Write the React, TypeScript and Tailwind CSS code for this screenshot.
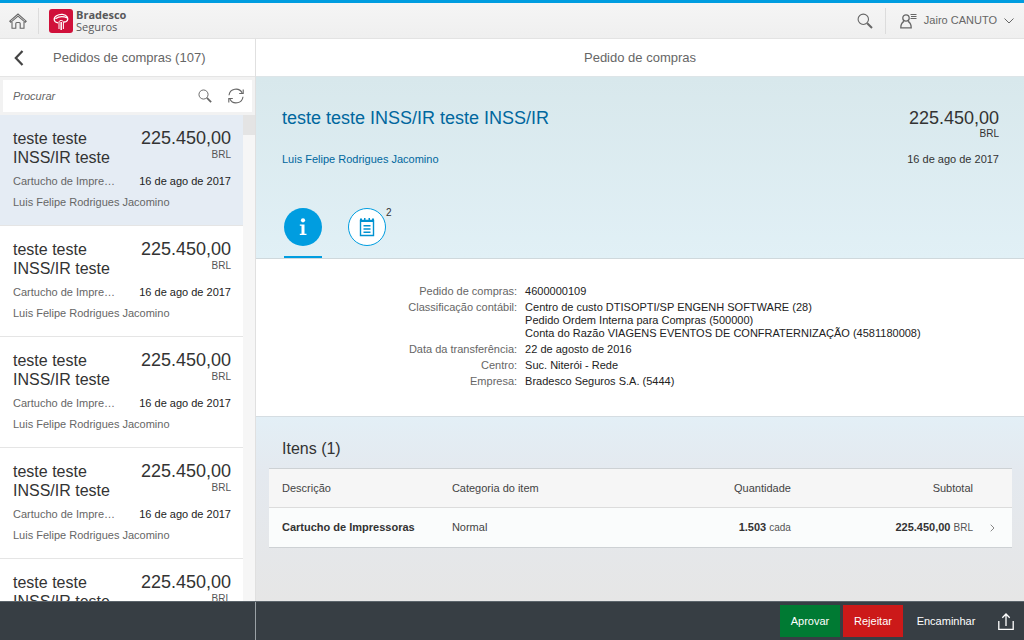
import React, { useState } from 'react';

interface Order {
  id: string;
  title: string;
  amount: string;
  currency: string;
  item: string;
  date: string;
  requester: string;
}

const ORDERS: Order[] = ['4600000109', '4600000110', '4600000111', '4600000112', '4600000113'].map(
  (id) => ({
    id,
    title: 'teste teste INSS/IR teste',
    amount: '225.450,00',
    currency: 'BRL',
    item: 'Cartucho de Impressoras',
    date: '16 de ago de 2017',
    requester: 'Luis Felipe Rodrigues Jacomino',
  })
);

const DETAILS: { label: string; lines: string[] }[] = [
  { label: 'Pedido de compras:', lines: ['4600000109'] },
  {
    label: 'Classificação contábil:',
    lines: [
      'Centro de custo DTISOPTI/SP ENGENH SOFTWARE (28)',
      'Pedido Ordem Interna para Compras (500000)',
      'Conta do Razão VIAGENS EVENTOS DE CONFRATERNIZAÇÃO (4581180008)',
    ],
  },
  { label: 'Data da transferência:', lines: ['22 de agosto de 2016'] },
  { label: 'Centro:', lines: ['Suc. Niterói - Rede'] },
  { label: 'Empresa:', lines: ['Bradesco Seguros S.A. (5444)'] },
];

const SearchIcon = ({ className }: { className: string }) => (
  <svg viewBox="0 0 16 16" className={className} fill="none" stroke="currentColor">
    <circle cx="6.3" cy="6.3" r="5.2" strokeWidth="1.1" />
    <path d="M10.2 10.2l4.8 4.8" strokeWidth="2" />
  </svg>
);

const HomeIcon = () => (
  <svg viewBox="0 0 18 16" className="w-[18px] h-4" fill="none" stroke="currentColor" strokeWidth="1.1">
    <path d="M.8 8.2L9 1l8.2 7.2-1 1.1L9 3.2 1.8 9.3z" />
    <path d="M3 9v6.3h3.8V10.5q0-1 1-1h2.4q1 0 1 1v4.8H15V9" />
  </svg>
);

const RefreshIcon = () => (
  <svg viewBox="0 0 16 16" className="w-4 h-4" fill="none" stroke="currentColor" strokeWidth="1.1">
    <path d="M1 7.3A7 7 0 0 1 14.2 5M15 8.7A7 7 0 0 1 1.8 11" />
    <path d="M15.2 1.5v4h-4M.8 14.5v-4h4" />
  </svg>
);

const UserIcon = () => (
  <svg viewBox="0 0 17 16" className="w-[17px] h-4" fill="none" stroke="currentColor" strokeWidth="1.3">
    <circle cx="6" cy="5" r="3.2" />
    <path d="M4 8.4C1.8 9.5.8 11.5.8 14.8h10.4c0-3.3-1-5.3-3.2-6.4" />
    <path d="M10.5 1.5h6M11 3.5h5.5M10.5 5.5h6" strokeWidth="1" />
  </svg>
);

const Logo = () => (
  <div className="flex items-center gap-[3px]">
    <svg viewBox="0 0 24 24" className="w-6 h-6">
      <rect width="24" height="24" rx="3" fill="#d0103a" />
      <path
        d="M9 13.8C4.500 13.500 4 9 7.500 6.800 11 4.600 16.500 5 18.300 8c1.500 2.800-.5 5-3.300 5M6.500 9.800C9.500 7.600 14.500 7.200 18.300 9"
        fill="none"
        stroke="#fff"
        strokeWidth="1.3"
      />
      <path d="M10 20v-7.200c.3-1.800 4-1.800 4.400 0V20" fill="none" stroke="#fff" strokeWidth="1" />
      <path d="M12.2 13v8" stroke="#fff" strokeWidth="1.5" />
    </svg>
    <div className="font-['Open_Sans',sans-serif] text-[11px] leading-[12px] text-[#58585a]">
      <div className="font-bold">Bradesco</div>
      <div>Seguros</div>
    </div>
  </div>
);

const OrderRow = ({ order, selected, onSelect }: { order: Order; selected: boolean; onSelect: () => void }) => (
  <li>
    <button
      onClick={onSelect}
      className={`flex flex-col items-stretch justify-start w-full h-[111px] pt-[14px] pl-[13px] pr-3 text-left text-[11px] leading-[14px] border-b border-[#e5e5e5] ${
        selected ? 'bg-[#e5ecf4]' : 'bg-white'
      }`}
    >
      <div className="flex justify-between">
        <div className="w-[110px] text-[16px] leading-[19px] text-[#333]">{order.title}</div>
        <div className="text-right">
          <div className="text-[18px] leading-[19px] text-[#333]">{order.amount}</div>
          <div className="text-[10px] leading-[13px] text-[#555]">{order.currency}</div>
        </div>
      </div>
      <div className="flex justify-between mt-[7px]">
        <span className="w-[105px] truncate text-[#666]">{order.item}</span>
        <span className="text-[#222]">{order.date}</span>
      </div>
      <div className="mt-[7px] text-[#666]">{order.requester}</div>
    </button>
  </li>
);

export default function App() {
  const [selectedId, setSelectedId] = useState(ORDERS[0].id);
  const [tab, setTab] = useState<'info' | 'notes'>('info');

  return (
    <div className="h-screen flex flex-col overflow-hidden bg-white font-['Liberation_Sans',Arial,sans-serif] text-[11px] text-[#333]">
      {/* Shell header */}
      <header className="flex items-center h-[39px] shrink-0 border-t-[3px] border-t-[#009de0] border-b border-b-[#e3e3e3] bg-linear-to-b from-[#f5f5f5] to-[#efefef] text-[#666]">
        <button aria-label="Início" className="flex justify-center w-9">
          <HomeIcon />
        </button>
        <div className="w-px h-[26px] ml-[2px] mr-[10px] bg-[#dcdcdc]" />
        <Logo />
        <button aria-label="Pesquisar" className="ml-auto mr-3">
          <SearchIcon className="w-4 h-4" />
        </button>
        <div className="w-px h-[26px] mr-[14px] bg-[#dcdcdc]" />
        <button className="flex items-center gap-[7px] mr-[10px]">
          <UserIcon />
          Jairo CANUTO
          <svg viewBox="0 0 10 6" className="w-[10px] h-[6px]" fill="none" stroke="currentColor">
            <path d="M.5.5L5 5 9.5.5" />
          </svg>
        </button>
      </header>

      <div className="flex flex-1 min-h-0">
        {/* Master list */}
        <aside className="flex flex-col w-1/4 min-w-[256px] border-r border-[#e0e0e0]">
          <div className="flex items-center h-[38px] shrink-0 border-b border-[#e5e5e5]">
            <button aria-label="Voltar" className="ml-[14px] mr-[29px]">
              <svg viewBox="0 0 10 16" className="w-[10px] h-4" fill="none" stroke="#444" strokeWidth="2.2">
                <path d="M8.5 1L1.8 8l6.7 7" />
              </svg>
            </button>
            <h1 className="text-[13px] text-[#666]">Pedidos de compras (107)</h1>
          </div>
          <div className="shrink-0 p-[3px] bg-[#f2f2f2]">
            <div className="flex items-center h-8 pl-[10px] pr-2 bg-white text-[#666]">
              <input
                type="search"
                aria-label="Procurar"
                placeholder="Procurar"
                className="flex-1 min-w-0 text-[11px] italic outline-none placeholder:text-[#666]"
              />
              <button aria-label="Pesquisar pedidos" className="mr-4">
                <SearchIcon className="w-[14px] h-[14px]" />
              </button>
              <button aria-label="Atualizar">
                <RefreshIcon />
              </button>
            </div>
          </div>
          <div className="flex flex-1 min-h-0">
            <ul className="flex-1 overflow-hidden">
              {ORDERS.map((order) => (
                <OrderRow
                  key={order.id}
                  order={order}
                  selected={order.id === selectedId}
                  onSelect={() => setSelectedId(order.id)}
                />
              ))}
            </ul>
            <div className="w-3 bg-[#f6f6f6]">
              <div className="h-5 bg-[#e4e4e4]" />
            </div>
          </div>
        </aside>

        {/* Detail */}
        <main className="flex flex-col flex-1 min-w-0">
          <div className="flex items-center justify-center h-[38px] shrink-0 border-b border-[#dde5e8] text-[13px] text-[#666]">
            Pedido de compras
          </div>

          <section className="shrink-0 pt-[30px] pl-[26px] pr-[25px] border-b border-[#cfd8dc] bg-linear-to-b from-[#d8e8ec] to-[#e1f0f6]">
            <div className="flex justify-between">
              <h2 className="text-[18px] leading-[22px] text-[#00679e]">teste teste INSS/IR teste INSS/IR</h2>
              <div className="text-right">
                <div className="text-[18px] leading-[22px]">225.450,00</div>
                <div className="text-[10px] leading-[10px]">BRL</div>
              </div>
            </div>
            <div className="flex justify-between mt-[13px] leading-[14px]">
              <a href="#requester" className="text-[#00679e]">
                Luis Felipe Rodrigues Jacomino
              </a>
              <span>16 de ago de 2017</span>
            </div>
            <div className="flex gap-[26px] mt-[42px] px-[2px]">
              <button
                aria-label="Informações"
                onClick={() => setTab('info')}
                className={`pb-[10px] border-b-2 ${tab === 'info' ? 'border-[#009de0]' : 'border-transparent'}`}
              >
                <span className="flex items-center justify-center w-[38px] h-[38px] rounded-full bg-[#009de0]">
                  <svg viewBox="0 0 8 18" className="w-2 h-[18px]" fill="#fff">
                    <circle cx="4" cy="2.3" r="2.1" />
                    <path d="M.8 6.5h4.7v9.2H7.5V17H.8v-1.3h1.7V7.8H.8z" />
                  </svg>
                </span>
              </button>
              <button
                aria-label="Anotações"
                onClick={() => setTab('notes')}
                className={`relative pb-[10px] border-b-2 ${tab === 'notes' ? 'border-[#009de0]' : 'border-transparent'}`}
              >
                <span className="flex items-center justify-center w-[38px] h-[38px] rounded-full border border-[#009de0] bg-white">
                  <svg viewBox="0 0 16 20" className="w-4 h-5" fill="none" stroke="#0092d1">
                    <path d="M1.5 3.5h13v15h-13z" strokeWidth="1.4" />
                    <path d="M1 1.5h2V3h2V1h1.5v2h3V1H11v2h2V1.5h2V5H1z" fill="#0092d1" stroke="none" />
                    <path d="M4.5 8.7h7M4.5 12h7M4.5 15.3h7" strokeWidth="1.4" />
                  </svg>
                </span>
                <span className="absolute left-full top-0 text-[10px] leading-[10px]">2</span>
              </button>
            </div>
          </section>

          <dl className="grid grid-cols-[34%_1fr] gap-x-2 gap-y-[3px] content-start shrink-0 pt-[26px] pb-7 leading-[13px]">
            {DETAILS.map(({ label, lines }) => (
              <React.Fragment key={label}>
                <dt className="text-right text-[#666]">{label}</dt>
                <dd className="text-[#222]">
                  {lines.map((line) => (
                    <div key={line}>{line}</div>
                  ))}
                </dd>
              </React.Fragment>
            ))}
          </dl>

          <section className="flex-1 pl-[13px] pr-3 border-t border-[#d5dde2] bg-linear-to-b from-[#e3eff6] via-[#e4e9ef] via-30% to-[#e6e6e6]">
            <h3 className="pt-[22px] pb-[9px] px-[13px] text-[16px] leading-5">Itens (1)</h3>
            <table className="w-full table-fixed border-y border-[#cdd1d4] bg-[#fafcfc]">
              <thead className="h-[39px] bg-[#f6f6f6] border-b border-[#dcdcdc] text-[#444]">
                <tr>
                  <th className="w-[23%] pl-[13px] text-left font-normal">Descrição</th>
                  <th className="w-[24%] pl-3 text-left font-normal">Categoria do item</th>
                  <th className="w-[25%] pr-[13px] text-right font-normal">Quantidade</th>
                  <th className="pr-[13px] text-right font-normal">Subtotal</th>
                  <th className="w-[26px]" aria-label="Abrir" />
                </tr>
              </thead>
              <tbody>
                <tr className="h-10">
                  <td className="pl-[13px] font-bold">Cartucho de Impressoras</td>
                  <td className="pl-3 text-[#444]">Normal</td>
                  <td className="pr-[13px] text-right">
                    <b>1.503</b> <span className="text-[10px] text-[#555]">cada</span>
                  </td>
                  <td className="pr-[13px] text-right">
                    <b>225.450,00</b> <span className="text-[10px] text-[#555]">BRL</span>
                  </td>
                  <td>
                    <svg viewBox="0 0 5 8" className="w-[5px] h-2 ml-1" fill="none" stroke="#888">
                      <path d="M.7.7L4 4 .7 7.3" />
                    </svg>
                  </td>
                </tr>
              </tbody>
            </table>
          </section>
        </main>
      </div>

      {/* Action bar */}
      <footer className="flex h-[39px] shrink-0 border-t border-[#5b646b] bg-[#373e44] text-white">
        <div className="w-1/4 min-w-[256px] border-r border-[#9aa1a6]" />
        <div className="flex flex-1 items-center justify-end gap-[3px] pr-[10px]">
          <button className="h-8 min-w-[60px] bg-[#007a33]">Aprovar</button>
          <button className="h-8 min-w-[60px] bg-[#cc1919]">Rejeitar</button>
          <button className="h-8 min-w-20">Encaminhar</button>
          <button aria-label="Compartilhar" className="ml-[9px]">
            <svg viewBox="0 0 16 17" className="w-4 h-[17px]" fill="none" stroke="#fff" strokeWidth="1.3">
              <path d="M.8 8v8.3h14.4V8M8 13V1M4.3 4.8L8 1l3.7 3.8" />
            </svg>
          </button>
        </div>
      </footer>
    </div>
  );
}
